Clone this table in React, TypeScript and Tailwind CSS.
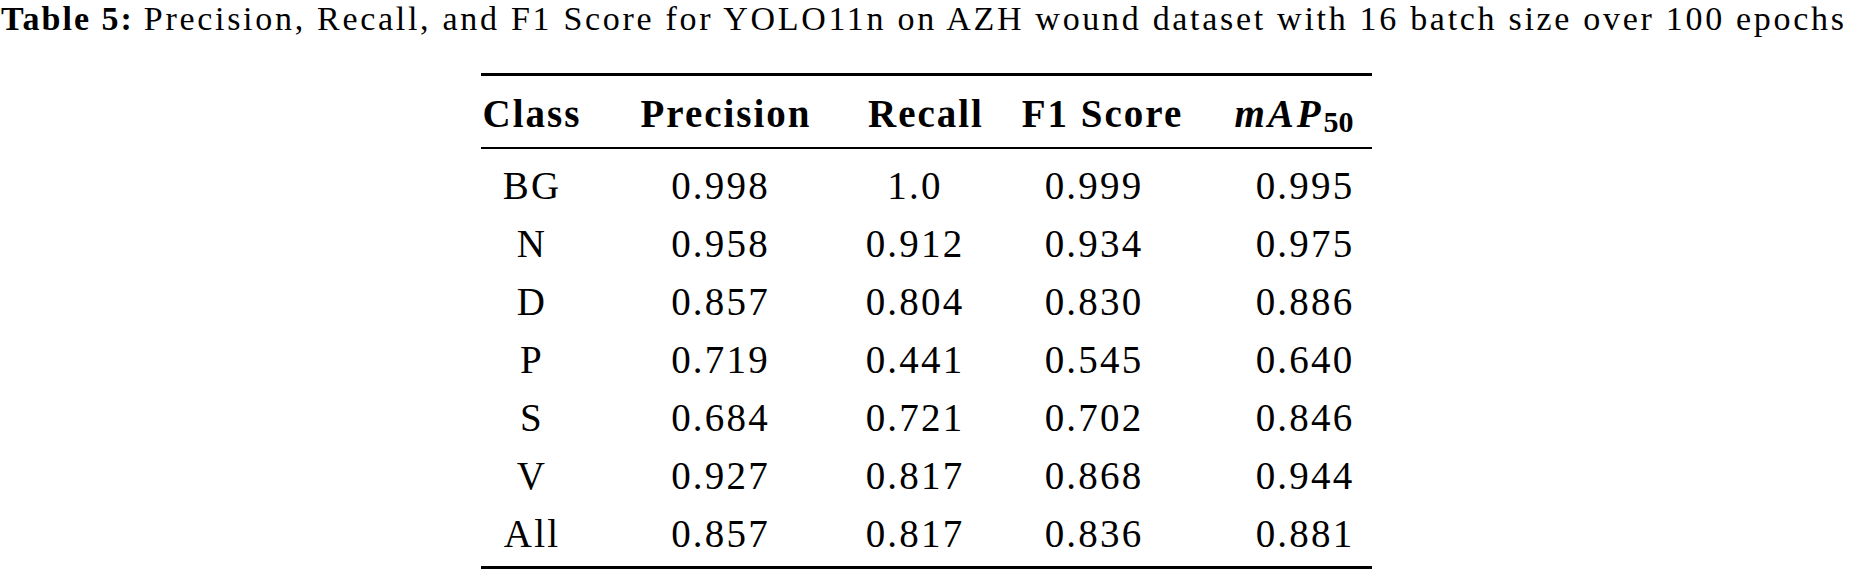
import React from "react";

const rows: [string, string, string, string, string][] = [
  ["BG", "0.998", "1.0", "0.999", "0.995"],
  ["N", "0.958", "0.912", "0.934", "0.975"],
  ["D", "0.857", "0.804", "0.830", "0.886"],
  ["P", "0.719", "0.441", "0.545", "0.640"],
  ["S", "0.684", "0.721", "0.702", "0.846"],
  ["V", "0.927", "0.817", "0.868", "0.944"],
  ["All", "0.857", "0.817", "0.836", "0.881"],
];

const grid = "grid grid-cols-[102px_275px_114px_244px_156px]";

export default function App() {
  return (
    <div className="w-[1854px] h-[573px] bg-white text-black overflow-hidden font-['Liberation_Serif',serif]">
      <div className="h-[38px] leading-[38px] text-[34px] whitespace-nowrap pl-[1px] tracking-[2.7px]">
        <span className="font-bold tracking-[2px]">Table 5:</span>
        <span className="inline-block w-[10px]"></span>
        <span>
          Precision, Recall, and F1 Score for YOLO11n on AZH wound dataset with 16 batch size over 100 epochs
        </span>
      </div>

      <div className="ml-[481px] w-[891px] mt-[35px]">
        <div className="h-[3px] bg-black"></div>
        <div className={`${grid} h-[71px] pt-[4px] leading-[67px] text-[39px] font-bold tracking-[2px]`}>
          <div className="text-center">Class</div>
          <div className="text-center pl-[11px]">Precision</div>
          <div className="text-center pl-[10px]">Recall</div>
          <div className="text-center pl-[17px]">F1 Score</div>
          <div className="text-center whitespace-nowrap">
            <span className="italic tracking-[3px]">mAP</span>
            <sub className="text-[30px] not-italic tracking-normal relative top-[5px]">50</sub>
          </div>
        </div>
        <div className="h-[2px] bg-black"></div>
        <div className="pt-[8px]">
          {rows.map((r) => (
            <div key={r[0]} className={`${grid} h-[58px] leading-[58px] text-[39px] tracking-[2.2px]`}>
              <div className="text-center">{r[0]}</div>
              <div className="text-center">{r[1]}</div>
              <div className="text-center">{r[2]}</div>
              <div className="text-center">{r[3]}</div>
              <div className="text-center pl-[22px]">{r[4]}</div>
            </div>
          ))}
        </div>
        <div className="h-[3px] bg-black mt-[3px]"></div>
      </div>
    </div>
  );
}
